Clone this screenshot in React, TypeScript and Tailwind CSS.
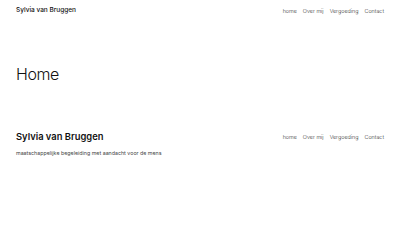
export default function App() {
  return (
    <div className="w-[400px] h-[250px] bg-white text-[#111] font-['Inter',_'Noto_Sans',_sans-serif] flex flex-col">
      {/* header */}
      <header className="flex items-center justify-between px-4 h-[22px]">
        <span className="text-[6.5px] font-medium">Sylvia van Bruggen</span>
        <nav className="flex gap-[6px] text-[5.4px] font-light text-[#333]">
          <a>home</a>
          <a>Over mij</a>
          <a>Vergoeding</a>
          <a>Contact</a>
        </nav>
      </header>

      {/* page title */}
      <section className="px-4 pt-[41px] h-[108px]">
        <h1 className="text-[16px] font-light leading-[22px] tracking-tight">Home</h1>
      </section>

      {/* footer */}
      <footer className="flex justify-between px-4">
        <div className="flex flex-col">
          <span className="text-[9.4px] font-semibold leading-[14px]">Sylvia van Bruggen</span>
          <span className="text-[5.3px] text-[#444] mt-[6px]">
            maatschappelijke begeleiding met aandacht voor de mens
          </span>
        </div>
        <nav className="flex gap-[6px] text-[5.4px] font-light text-[#333] pt-[3px] h-fit">
          <a>home</a>
          <a>Over mij</a>
          <a>Vergoeding</a>
          <a>Contact</a>
        </nav>
      </footer>
    </div>
  );
}
